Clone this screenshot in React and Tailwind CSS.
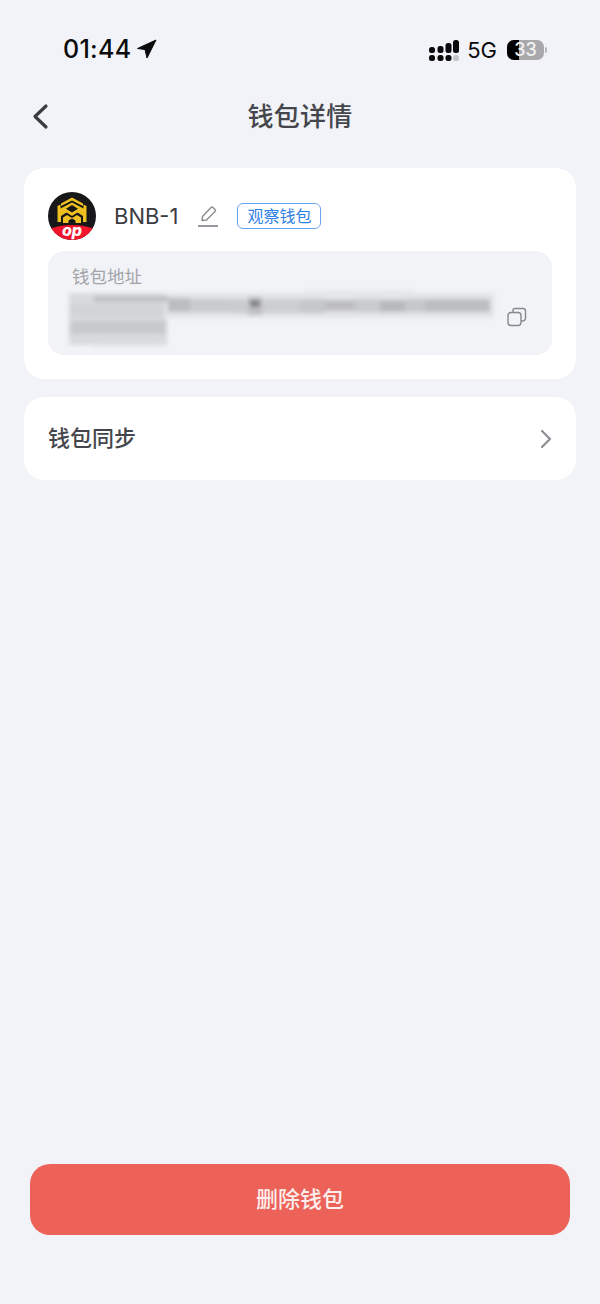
import React from "react";

const cjk = "font-['Inter','Noto_Sans_CJK_SC',sans-serif]";

const Signal = () => (
  <svg width="30" height="21" viewBox="0 0 30 21" fill="#0b0b0b">
    <rect x="0" y="7" width="6" height="6" rx="2.500" />
    <rect x="8.500" y="6" width="6" height="7" rx="2.500" />
    <rect x="16.500" y="3" width="6" height="10" rx="2.500" />
    <rect x="24" y="0" width="6" height="13" rx="2.500" />
    <rect x="0" y="15" width="6" height="6" rx="2.500" />
    <rect x="8.500" y="15" width="6" height="6" rx="2.500" />
    <rect x="16.500" y="15" width="6" height="6" rx="2.500" />
    <rect x="24" y="15" width="6" height="6" rx="2.500" fill="#c4c5c9" />
  </svg>
);

const Battery = () => (
  <div className="flex items-center gap-[1px]">
    <div className="relative w-[37px] h-[20px] rounded-[7px] bg-[#a9a9ab] flex items-center justify-center">
      <div className="absolute left-0 top-0 bottom-0 w-[12px] bg-black rounded-l-[7px]"></div>
      <span className="relative text-[18px] font-medium leading-[20px] text-[#f2f2f4] font-['Inter',sans-serif]">33</span>
    </div>
    <div className="w-[2px] h-[6px] rounded-r-full bg-[#b5b5b8]"></div>
  </div>
);

const Logo = () => (
  <svg width="48" height="48" viewBox="0 0 48 48" className="shrink-0">
    <defs>
      <clipPath id="logo-clip">
        <circle cx="24" cy="24" r="24" />
      </clipPath>
    </defs>
    <g clipPath="url(#logo-clip)">
      <rect width="48" height="48" fill="#17171a" />
      <path d="M-2 38 Q24 28 50 38 V50 H-2 Z" fill="#f0142c" />
      <path d="M24 5.500 L35 11.500 V14 L24 8.500 L13 14 V11.500 Z" fill="#efc01f" />
      <path d="M9.500 14 L12.500 12.500 V16.500 L24 10.500 L35.500 16.500 V12.500 L38.500 14 V30 H35 V24 L29.500 20.500 L24 24 L18.500 20.500 L13 24 V30 H9.500 Z" fill="#efc01f" />
      <path d="M24 13 L30 16.800 L24 20.500 L18 16.800 Z" fill="#17171a" />
      <path d="M24 26 L29 23 L33 25.500 V31 H15 V25.500 L19 23 Z" fill="#efc01f" />
      <path d="M20.500 31 V28.500 L24 26.500 L27.500 28.500 V31 Z" fill="#17171a" />
      <text x="24" y="44" textAnchor="middle" fontSize="16" fontWeight="800" fontStyle="italic" fill="#fff" fontFamily="Inter, sans-serif">op</text>
    </g>
  </svg>
);

// smeared address, blurred mosaic in the screenshot
const BlurredAddress = () => (
  <svg width="440" height="66" viewBox="0 0 440 66" className="absolute left-[16px] top-[36px]">
    <defs>
      <filter id="smear" x="-5%" y="-20%" width="110%" height="140%">
        <feGaussianBlur stdDeviation="2.200" />
      </filter>
    </defs>
    <g filter="url(#smear)">
      {/* left block */}
      <rect x="5" y="6" width="98" height="52" fill="#d9dade" />
      <rect x="6" y="17" width="96" height="12" fill="#d2d3d6" />
      <rect x="6" y="34" width="96" height="13" fill="#c8c9cc" />
      <rect x="30" y="57" width="68" height="4" fill="#e8e9ec" />
      {/* halo of the long strip */}
      <rect x="100" y="6" width="330" height="25" fill="#e3e4e7" />
      <rect x="240" y="3" width="110" height="6" fill="#e6e7ea" />
      {/* core of the strip */}
      <rect x="30" y="9" width="74" height="6" fill="#bfc0c3" />
      <rect x="104" y="11" width="22" height="14" fill="#bcbdc0" />
      <rect x="126" y="12" width="40" height="13" fill="#c9cacd" />
      <rect x="166" y="12" width="20" height="14" fill="#cbccCF" />
      <rect x="184" y="10" width="14" height="18" fill="#bfc0c3" />
      <rect x="186" y="13" width="10" height="7" fill="#808184" />
      <rect x="198" y="12" width="38" height="14" fill="#cdced1" />
      <rect x="236" y="12" width="25" height="14" fill="#c6c7ca" />
      <rect x="261" y="13" width="30" height="11" fill="#bdbec1" />
      <rect x="291" y="12" width="25" height="13" fill="#c9cacd" />
      <rect x="316" y="13" width="25" height="12" fill="#b8b9bc" />
      <rect x="341" y="12" width="20" height="13" fill="#c6c7ca" />
      <rect x="361" y="12" width="65" height="13" fill="#bdbec1" />
    </g>
  </svg>
);

const App = () => {
  return (
    <div className={`w-[600px] h-[1304px] bg-[#f1f3f8] flex flex-col ${cjk}`}>
      <div className="h-[97px] flex items-start justify-between pl-[63px] pr-[53px] pt-[35px]">
        <div className="flex items-center gap-[5px]">
          <span className="text-[25px] leading-[28px] font-medium tracking-[0.3px] text-[#0b0b0b]">01:44</span>
          <svg width="22" height="22" viewBox="0 0 22 22" fill="#0b0b0b" stroke="#0b0b0b" strokeWidth="1" strokeLinejoin="round">
            <path d="M1.500 10.500 L20 2 L11 20 L9 11.500 Z" />
          </svg>
        </div>
        <div className="flex items-center gap-[8px] pt-[3px]">
          <Signal />
          <span className="text-[22px] leading-[24px] text-[#0b0b0b] font-normal">5G</span>
          <div className="ml-[2px]">
            <Battery />
          </div>
        </div>
      </div>

      <div className="relative h-[40px] flex items-center justify-center">
        <svg width="22" height="30" viewBox="0 0 22 30" fill="none" stroke="#3b3c40" strokeWidth="3.200" strokeLinecap="round" strokeLinejoin="round" className="absolute left-[30px] top-[4px]">
          <path d="M16 5 L5 15.500 L16 26" />
        </svg>
        <h1 className="text-[26px] leading-[40px] font-medium tracking-[0.3px] text-[#45464b]">钱包详情</h1>
      </div>

      <div className="mt-[31px] mx-[24px] bg-white rounded-[20px] px-[24px] pt-[24px] h-[211px]">
        <div className="flex items-center h-[48px]">
          <Logo />
          <span className="ml-[18px] text-[22px] font-normal text-[#3c3d42]">BNB-1</span>
          <svg width="22" height="24" viewBox="0 0 22 24" fill="none" stroke="#8d8e93" strokeWidth="1.500" strokeLinejoin="round" className="ml-[19px]">
            <path d="M5 16.500 L5.500 12.500 L14 3.500 Q15 2.500 16 3.500 L18 5.500 Q19 6.500 18 7.500 L9.500 16 Z" />
            <path d="M1 22 H21" strokeWidth="1.800" />
          </svg>
          <span className="ml-[18px] h-[26px] px-[9px] flex items-center rounded-[6px] border border-[#6aa5ee] text-[16px] text-[#2f80e4]">观察钱包</span>
        </div>
        <div className="relative mt-[11px] h-[104px] rounded-[16px] bg-[#f1f3f7] px-[24px] pt-[14px]">
          <p className="text-[17.500px] leading-[24px] text-[#a3a4a9]">钱包地址</p>
          <BlurredAddress />
          <svg width="20" height="20" viewBox="0 0 20 20" fill="none" stroke="#88898e" strokeWidth="1.400" className="absolute left-[459px] top-[56px]">
            <rect x="1" y="5.500" width="13" height="13" rx="3" />
            <path d="M6 5.500 V3.500 Q6 1.500 8 1.500 H16 Q18.500 1.500 18.500 4 V11 Q18.500 14 15 14 H14" />
          </svg>
        </div>
      </div>

      <div className="mt-[18px] mx-[24px] h-[83px] bg-white rounded-[20px] px-[24px] flex items-center justify-between">
        <span className="text-[22px] font-medium text-[#45464b]">钱包同步</span>
        <svg width="14" height="22" viewBox="0 0 14 22" fill="none" stroke="#8d8e93" strokeWidth="2.200" strokeLinecap="round" strokeLinejoin="round" className="mr-[-1px]">
          <path d="M3 3 L11 11 L3 19" />
        </svg>
      </div>

      <div className="mt-auto mb-[69px] mx-[30px] h-[71px] rounded-[20px] bg-[#ec6158] flex items-center justify-center">
        <span className="text-[22px] font-medium text-[#fbeeed]">删除钱包</span>
      </div>
    </div>
  );
};

export default App;
